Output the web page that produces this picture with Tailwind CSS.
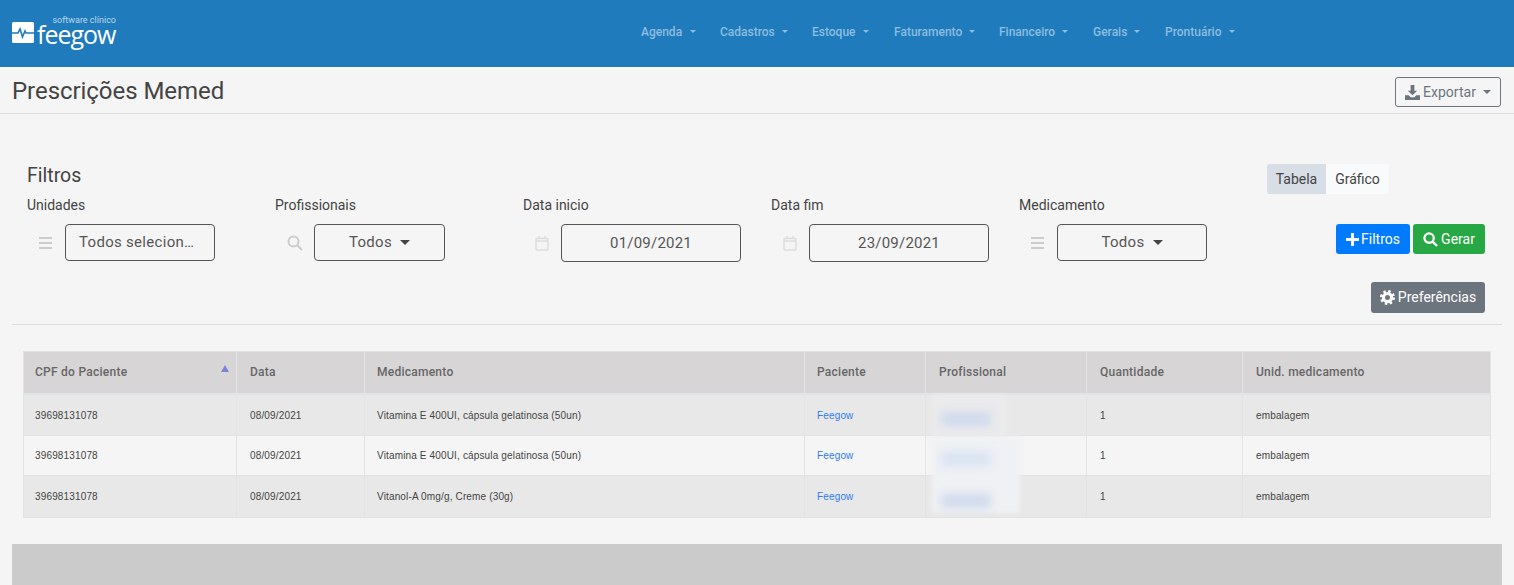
<!DOCTYPE html>
<html lang="pt-BR">

<head>
    <meta charset="UTF-8">
    <meta name="viewport" content="width=device-width, initial-scale=1.0">
    <title>Prescrições Memed</title>
    <script src="https://cdn.jsdelivr.net/npm/@tailwindcss/browser@4"></script>
</head>

<body class="h-[585px] overflow-hidden bg-[#f5f5f5] font-['Roboto',sans-serif] text-[#444]">
    <!-- topo -->
    <header class="h-[67px] bg-[#1f7bbc] flex items-start">
        <a class="w-[641px] h-full flex items-start pl-[12px] pt-[16px] text-white" href="#">
            <svg class="mt-[6px] mr-[3px]" width="22" height="21" viewBox="0 0 22 21">
                <rect width="22" height="21" rx="1.5" fill="#fff" />
                <path d="M0 11H6L8 7L10.500 15L13 9L14 11H22" fill="none" stroke="#1f7bbc" stroke-width="1.600" />
            </svg>
            <span class="relative block w-[79px] h-[34px]">
                <span class="absolute right-0 top-0 text-[9px] leading-[9px] text-[#bcd8ec] whitespace-nowrap">software clínico</span>
                <span class="absolute left-0 top-[10px] text-[25px] leading-[16px] tracking-[-1px] font-normal font-['Open_Sans',sans-serif]">feegow</span>
            </span>
        </a>
        <nav class="flex items-center h-[63px] text-[12px] text-[#8dbde0] font-medium">
            <a class="flex items-center gap-[8px] w-[79px]" href="#">Agenda <span class="border-x-[3px] border-t-[3px] border-x-transparent border-t-[#8dbde0]"></span></a>
            <a class="flex items-center gap-[7px] w-[92px]" href="#">Cadastros <span class="border-x-[3px] border-t-[3px] border-x-transparent border-t-[#8dbde0]"></span></a>
            <a class="flex items-center gap-[7px] w-[82px]" href="#">Estoque <span class="border-x-[3px] border-t-[3px] border-x-transparent border-t-[#8dbde0]"></span></a>
            <a class="flex items-center gap-[7px] w-[105px]" href="#">Faturamento <span class="border-x-[3px] border-t-[3px] border-x-transparent border-t-[#8dbde0]"></span></a>
            <a class="flex items-center gap-[7px] w-[94px]" href="#">Financeiro <span class="border-x-[3px] border-t-[3px] border-x-transparent border-t-[#8dbde0]"></span></a>
            <a class="flex items-center gap-[7px] w-[72px]" href="#">Gerais <span class="border-x-[3px] border-t-[3px] border-x-transparent border-t-[#8dbde0]"></span></a>
            <a class="flex items-center gap-[7px]" href="#">Prontuário <span class="border-x-[3px] border-t-[3px] border-x-transparent border-t-[#8dbde0]"></span></a>
        </nav>
    </header>

    <!-- titulo -->
    <div class="h-[47px] border-b border-[#ddd] flex items-center justify-between pl-[12px] pr-[13px] pt-[4px]">
        <h1 class="text-[24px] tracking-[-0.05px] text-[#444] leading-[48px] mb-[2px]">Prescrições Memed</h1>
        <button class="w-[106px] h-[30px] border border-[#6c757d] rounded-[3px] flex items-center justify-center gap-[3px] text-[14px] text-[#6c757d]">
            <svg width="15" height="15" viewBox="0 0 16 16" fill="#6c757d">
                <path d="M6 0H10V6H13L8 11L3 6H6ZM0 11H4L6 13H10L12 11H16V16H0Z" />
            </svg>
            Exportar
            <span class="ml-[4px] border-x-[4px] border-t-[4px] border-x-transparent border-t-[#6c757d]"></span>
        </button>
    </div>

    <!-- filtros -->
    <section class="relative h-[211px] mx-[12px] border-b border-[#ddd] pl-[15px] pt-[50px]">
        <h2 class="text-[19.500px] leading-[24px] text-[#444]">Filtros</h2>
        <div class="flex mt-[7px] text-[14px]">
            <div class="w-[248px]">
                <label class="block leading-[20px]">Unidades</label>
                <div class="flex items-center mt-[9px]">
                    <svg class="ml-[12px] mr-[13px]" width="13" height="12" viewBox="0 0 13 12" fill="#ccc"><path d="M0 0H13V2H0ZM0 5H13V7H0ZM0 10H13V12H0Z" /></svg>
                    <div class="w-[150px] h-[37px] border border-[#555] rounded-[4px] flex items-center pl-[13px] text-[15px] tracking-[0.3px] text-[#555]">Todos selecion…</div>
                </div>
            </div>
            <div class="w-[248px]">
                <label class="block leading-[20px]">Profissionais</label>
                <div class="flex items-center mt-[9px]">
                    <svg class="ml-[12px] mr-[11px]" width="16" height="16" viewBox="0 0 16 16" fill="none" stroke="#ccc" stroke-width="2"><circle cx="6.500" cy="6.500" r="5" /><path d="M10 10L15 15" /></svg>
                    <div class="w-[131px] h-[37px] border border-[#555] rounded-[4px] flex items-center justify-center gap-[8px] text-[15px] tracking-[0.3px] text-[#555]">Todos <span class="border-x-[5px] border-t-[5px] border-x-transparent border-t-[#444]"></span></div>
                </div>
            </div>
            <div class="w-[248px]">
                <label class="block leading-[20px]">Data inicio</label>
                <div class="flex items-center mt-[9px]">
                    <svg class="ml-[12px] mr-[12px]" width="14" height="15" viewBox="0 0 14 15" fill="none" stroke="#ddd" stroke-width="1.500"><rect x="1" y="2.500" width="12" height="11.500" rx="1" /><path d="M1 5H13M4 0V3M10 0V3" /></svg>
                    <div class="w-[180px] h-[38px] border border-[#555] rounded-[4px] flex items-center justify-center text-[15px] tracking-[0.2px] text-[#555]">01/09/2021</div>
                </div>
            </div>
            <div class="w-[248px]">
                <label class="block leading-[20px]">Data fim</label>
                <div class="flex items-center mt-[9px]">
                    <svg class="ml-[12px] mr-[12px]" width="14" height="15" viewBox="0 0 14 15" fill="none" stroke="#ddd" stroke-width="1.500"><rect x="1" y="2.500" width="12" height="11.500" rx="1" /><path d="M1 5H13M4 0V3M10 0V3" /></svg>
                    <div class="w-[180px] h-[38px] border border-[#555] rounded-[4px] flex items-center justify-center text-[15px] tracking-[0.2px] text-[#555]">23/09/2021</div>
                </div>
            </div>
            <div class="w-[200px]">
                <label class="block leading-[20px]">Medicamento</label>
                <div class="flex items-center mt-[9px]">
                    <svg class="ml-[12px] mr-[13px]" width="13" height="12" viewBox="0 0 13 12" fill="#ccc"><path d="M0 0H13V2H0ZM0 5H13V7H0ZM0 10H13V12H0Z" /></svg>
                    <div class="w-[150px] h-[37px] border border-[#555] rounded-[4px] flex items-center justify-center gap-[8px] text-[15px] tracking-[0.3px] text-[#555]">Todos <span class="border-x-[5px] border-t-[5px] border-x-transparent border-t-[#444]"></span></div>
                </div>
            </div>
        </div>

        <!-- acoes -->
        <div class="absolute right-[17px] top-[50px] w-[218px] flex flex-col items-end text-[14px]">
            <div class="self-start flex h-[30px]">
                <span class="w-[59px] bg-[#d8dee6] rounded-l-[3px] flex items-center justify-center">Tabela</span>
                <span class="w-[63px] bg-[#f9fafb] rounded-r-[3px] flex items-center justify-center">Gráfico</span>
            </div>
            <div class="flex gap-[3px] mt-[30px] text-white">
                <button class="w-[74px] h-[30px] bg-[#007bff] rounded-[3px] flex items-center justify-center gap-[2px]">
                    <svg width="13" height="13" viewBox="0 0 13 13" fill="#fff"><path d="M5 0H8V5H13V8H8V13H5V8H0V5H5Z" /></svg>
                    Filtros
                </button>
                <button class="w-[72px] h-[30px] bg-[#28a745] rounded-[3px] flex items-center justify-center gap-[3px]">
                    <svg width="15" height="15" viewBox="0 0 16 16" fill="none" stroke="#fff" stroke-width="2.400"><circle cx="6.500" cy="6.500" r="5" /><path d="M10 10L15 15" /></svg>
                    Gerar
                </button>
            </div>
            <button class="mt-[28px] w-[114px] h-[31px] bg-[#6c757d] rounded-[3px] flex items-center justify-center gap-[3px] text-white">
                <svg width="15" height="15" viewBox="0 0 24 24" fill="none" stroke="#fff">
                    <circle cx="12" cy="12" r="10" stroke-width="4" stroke-dasharray="3.900 3.950" />
                    <circle cx="12" cy="12" r="6.500" stroke-width="5" />
                </svg>
                Preferências
            </button>
        </div>
    </section>

    <!-- tabela -->
    <div class="relative mt-[26px] ml-[23px] w-[1467px]">
        <table class="w-[1467px] table-fixed border-collapse font-['Liberation_Sans',sans-serif] text-[10px] tracking-[0.15px] text-[#444]">
            <colgroup>
                <col class="w-[213px]"><col class="w-[128px]"><col class="w-[440px]"><col class="w-[121px]"><col class="w-[161px]"><col class="w-[156px]"><col class="w-[248px]">
            </colgroup>
            <thead class="bg-[#d7d5d6] text-[12px] tracking-[0.25px] text-[#666] text-left font-['Roboto',sans-serif]">
                <tr class="h-[42px] border-b-2 border-[#e0e3e8]">
                    <th class="relative pl-[11px] font-medium border border-[#e3e3e3]">CPF do Paciente<span class="absolute right-[7px] top-[13px] border-x-[4px] border-b-[7px] border-x-transparent border-b-[#7f83d8]"></span></th>
                    <th class="pl-[13px] font-medium border border-[#e3e3e3]">Data</th>
                    <th class="pl-[12px] font-medium border border-[#e3e3e3]">Medicamento</th>
                    <th class="pl-[12px] font-medium border border-[#e3e3e3]">Paciente</th>
                    <th class="pl-[13px] font-medium border border-[#e3e3e3]">Profissional</th>
                    <th class="pl-[13px] font-medium border border-[#e3e3e3]">Quantidade</th>
                    <th class="pl-[13px] font-medium border border-[#e3e3e3]">Unid. medicamento</th>
                </tr>
            </thead>
            <tbody>
                <tr class="h-[42px] bg-[#e8e8e8] [&>td]:pt-[2px]">
                    <td class="pl-[11px] border border-[#e3e3e3]">39698131078</td>
                    <td class="pl-[13px] border border-[#e3e3e3]">08/09/2021</td>
                    <td class="pl-[12px] border border-[#e3e3e3]">Vitamina E 400UI, cápsula gelatinosa (50un)</td>
                    <td class="pl-[12px] border border-[#e3e3e3] text-[#2f7bf0]">Feegow</td>
                    <td class="border border-[#e3e3e3]"></td>
                    <td class="pl-[13px] border border-[#e3e3e3]">1</td>
                    <td class="pl-[13px] border border-[#e3e3e3]">embalagem</td>
                </tr>
                <tr class="h-[40px] bg-[#f5f5f5]">
                    <td class="pl-[11px] border border-[#e3e3e3]">39698131078</td>
                    <td class="pl-[13px] border border-[#e3e3e3]">08/09/2021</td>
                    <td class="pl-[12px] border border-[#e3e3e3]">Vitamina E 400UI, cápsula gelatinosa (50un)</td>
                    <td class="pl-[12px] border border-[#e3e3e3] text-[#2f7bf0]">Feegow</td>
                    <td class="border border-[#e3e3e3]"></td>
                    <td class="pl-[13px] border border-[#e3e3e3]">1</td>
                    <td class="pl-[13px] border border-[#e3e3e3]">embalagem</td>
                </tr>
                <tr class="h-[42px] bg-[#e8e8e8]">
                    <td class="pl-[11px] border border-[#e3e3e3]">39698131078</td>
                    <td class="pl-[13px] border border-[#e3e3e3]">08/09/2021</td>
                    <td class="pl-[12px] border border-[#e3e3e3]">Vitanol-A 0mg/g, Creme (30g)</td>
                    <td class="pl-[12px] border border-[#e3e3e3] text-[#2f7bf0]">Feegow</td>
                    <td class="border border-[#e3e3e3]"></td>
                    <td class="pl-[13px] border border-[#e3e3e3]">1</td>
                    <td class="pl-[13px] border border-[#e3e3e3]">embalagem</td>
                </tr>
            </tbody>
        </table>

        <!-- nomes borrados -->
        <div class="absolute left-[909px] top-[44px] w-[75px] h-[42px] bg-[#ebebed] blur-[2px]"></div>
        <div class="absolute left-[909px] top-[86px] w-[88px] h-[76px] bg-[#f0f1f4] blur-[2px]"></div>
        <div class="absolute left-[918px] top-[61px] w-[50px] h-[14px] bg-[#cfdaec] blur-[5px]"></div>
        <div class="absolute left-[918px] top-[101px] w-[50px] h-[14px] bg-[#d8e3f3] blur-[5px]"></div>
        <div class="absolute left-[918px] top-[143px] w-[50px] h-[14px] bg-[#cfdaec] blur-[5px]"></div>
    </div>

    <div class="mt-[26px] mx-[12px] h-[41px] bg-[#cbcbcb]"></div>
</body>

</html>
